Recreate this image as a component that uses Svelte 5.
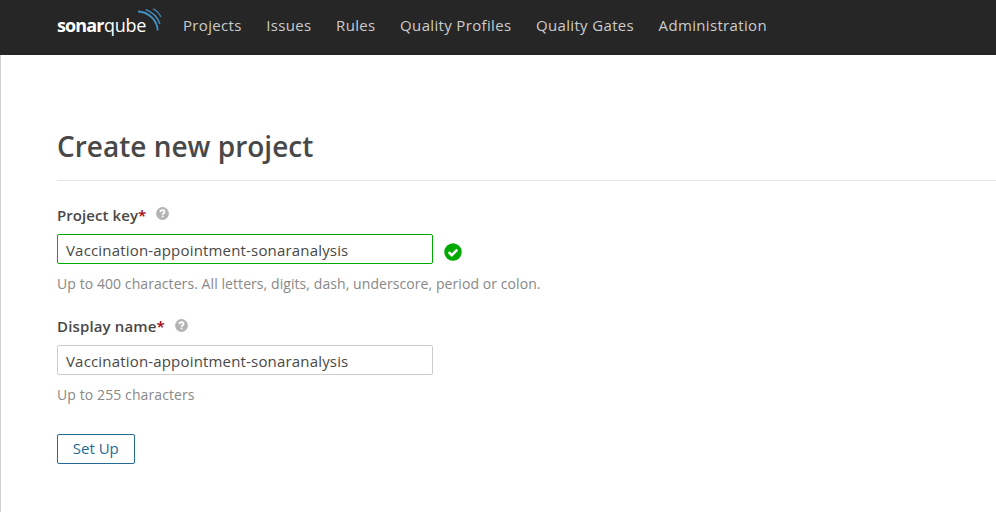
<script>
  const nav = ['Projects', 'Issues', 'Rules', 'Quality Profiles', 'Quality Gates', 'Administration'];
  let projectKey = $state('Vaccination-appointment-sonaranalysis');
  let displayName = $state('Vaccination-appointment-sonaranalysis');
</script>

{#snippet help()}
  <svg class="help" width="13" height="13" viewBox="0 0 13 13" aria-hidden="true">
    <circle cx="6.5" cy="6.5" r="6.4" fill="#b4b4b4" />
    <path d="M4.300 5.100C4.400 3.700 5.400 3.100 6.500 3.100s2.100.7 2.100 1.800c0 1.400-2 1.400-2 2.900" fill="none" stroke="#fff" stroke-width="1.700" />
    <rect x="5.700" y="8.600" width="1.800" height="1.700" fill="#fff" />
  </svg>
{/snippet}

<div class="page">
  <header>
    <a class="logo" href="#home" aria-label="Home">
      <b>sonar</b><span>qube</span>
      <svg width="25" height="24" viewBox="0 0 25 24" fill="none" stroke="#4390c2" aria-hidden="true">
        <path d="M0 3.5C10.5 3.8 19 12 19.8 22.5" stroke-width="1.9" />
        <path d="M7.6 1.7C14.5 4 19.6 9.2 21.9 16" stroke-width="1.4" />
        <path d="M15 .8c3.6 1.9 6.2 4.7 8 8.2" stroke-width="1.2" />
      </svg>
    </a>
    <nav>
      {#each nav as item}<a href="#nav">{item}</a>{/each}
    </nav>
  </header>

  <main>
    <h1>Create new project</h1>
    <form>
      <div class="field">
        <label for="key"><span class="key">Project key</span><em>*</em>{@render help()}</label>
        <div class="row">
          <input id="key" class="valid" bind:value={projectKey} />
          <svg width="18" height="18" viewBox="0 0 18 18" aria-hidden="true">
            <circle cx="9" cy="9" r="8.7" fill="#0a0" />
            <path d="M4.7 9.1l3.1 3.1 5.5-5.5" fill="none" stroke="#fff" stroke-width="2.5" />
          </svg>
        </div>
        <p class="long">Up to 400 characters. All letters, digits, dash, underscore, period or colon.</p>
      </div>
      <div class="field">
        <label for="name"><span>Display name</span><em>*</em>{@render help()}</label>
        <div class="row"><input id="name" bind:value={displayName} /></div>
        <p>Up to 255 characters</p>
      </div>
      <button type="button">Set Up</button>
    </form>
  </main>
</div>

<style>
  .page {
    box-sizing: border-box;
    height: 512px;
    overflow: hidden;
    background: #fff;
    color: #484848;
    font-family: "Open Sans", "Noto Sans", sans-serif;
    font-size: 15px;
  }
  header {
    display: flex;
    height: 55px;
    box-sizing: border-box;
    padding-left: 57px;
    background: #262626;
  }
  a { text-decoration: none; }
  .logo {
    display: flex;
    width: 126px;
    color: #fff;
    font-size: 18px;
    line-height: 24px;
    padding-top: 13px;
    box-sizing: border-box;
  }
  .logo b { width: 47px; letter-spacing: -0.9px; }
  .logo span { width: 34px; letter-spacing: -0.3px; }
  .logo svg { flex: none; margin-top: -5px; }
  nav { display: flex; gap: 24.5px; }
  nav a {
    color: #ccc;
    line-height: 20px;
    padding-top: 15px;
    letter-spacing: 0.34px;
    white-space: nowrap;
  }
  main {
    box-sizing: border-box;
    height: 457px;
    padding: 71px 0 0 56px;
    border-left: 1px solid #d0d0d0;
  }
  h1 {
    box-sizing: border-box;
    height: 55px;
    margin: 0 0 23px;
    border-bottom: 1px solid #e6e6e6;
    font-size: 28px;
    font-weight: 600;
    line-height: 40px;
  }
  .field { height: 111px; }
  label {
    display: flex;
    height: 30px;
    font-weight: 600;
    line-height: 22px;
    letter-spacing: 0.15px;
  }
  .key { letter-spacing: 0.08px; }
  em { color: #a4030f; font-style: normal; }
  .help { margin: 3px 0 0 10px; }
  .field + .field .help { margin-top: 4px; }
  .row { display: flex; height: 30px; }
  .row svg { margin: 9px 0 0 11px; }
  input {
    box-sizing: border-box;
    width: 375.5px;
    height: 30px;
    padding: 2px 8px 0;
    border: 1px solid #cdcdcd;
    border-radius: 2px;
    outline: none;
    background: #fff;
    color: #484848;
    font: 15px "Open Sans", "Noto Sans", sans-serif;
    letter-spacing: 0.175px;
  }
  .valid { border-color: #0a0; }
  p {
    margin: 10px 0 0;
    color: #888;
    font-size: 14px;
    line-height: 20px;
    letter-spacing: 0.1px;
  }
  .long { letter-spacing: 0.075px; }
  form { display: block; }
  .field:first-child label { height: 30px; }
  button {
    display: block;
    box-sizing: border-box;
    width: 77.5px;
    height: 30px;
    margin-top: 8px;
    padding: 0 0 2px;
    border: 1px solid #236a97;
    border-radius: 2px;
    background: #fff;
    color: #236a97;
    font: 15px "Open Sans", "Noto Sans", sans-serif;
  }
</style>
